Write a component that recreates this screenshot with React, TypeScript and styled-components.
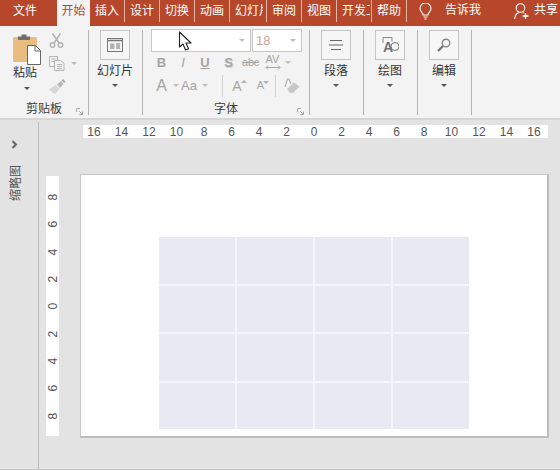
import React from "react";
import styled, { createGlobalStyle } from "styled-components";

const Global = createGlobalStyle`
  html, body { margin: 0; padding: 0; background: #e3e3e3; }
  * { box-sizing: border-box; }
`;

const CJK = `"Liberation Sans", "Noto Sans CJK SC", sans-serif`;

const Page = styled.div`
  position: relative;
  width: 560px;
  height: 470px;
  overflow: hidden;
  display: flex;
  flex-direction: column;
  background: #e3e3e3;
  font-family: ${CJK};
`;

const TabBar = styled.div`
  height: 26px;
  flex: none;
  display: flex;
  align-items: stretch;
  background: #b7472a;
`;

const Tab = styled.div<{ $w: number; $active?: boolean; $plain?: boolean }>`
  position: relative;
  width: ${(p) => p.$w}px;
  flex: none;
  display: flex;
  align-items: center;
  justify-content: ${(p) => (p.$plain ? "center" : "flex-start")};
  padding: 0 ${(p) => (p.$w > 50 ? 7 : 0)}px 8px ${(p) => (p.$plain ? 0 : 5)}px;
  font-size: 12px;
  color: ${(p) => (p.$active ? "#b7472a" : "#fff")};
  background: ${(p) => (p.$active ? "#f3f3f3" : "transparent")};
  ${(p) =>
    p.$active || p.$plain
      ? ""
      : `&::after { content: ""; position: absolute; right: 0; top: 0; bottom: 4px; width: 1px; background: #e6b5a5; }`}
`;

const TabText = styled.span<{ $clip?: boolean }>`
  display: block;
  width: ${(p) => (p.$clip ? "28px" : "auto")};
  overflow: hidden;
  white-space: nowrap;
`;

const Tell = styled.div`
  display: flex;
  align-items: flex-start;
  margin-left: 12px;
  padding-top: 3px;
  color: #fff;
  font-size: 12px;
  line-height: 14px;
  gap: 13px;
`;

const Share = styled(Tell)`
  margin-left: 33px;
  gap: 5px;
  white-space: nowrap;
`;

const Ribbon = styled.div`
  height: 94px;
  flex: none;
  display: flex;
  padding: 4px 0 3px;
  background: #f3f3f3;
  border-bottom: 2px solid #d6d6d6;
`;

const Group = styled.div<{ $w: number }>`
  position: relative;
  width: ${(p) => p.$w}px;
  flex: none;
  display: flex;
  flex-direction: column;
  border-right: 1px solid #b4b4b4;
`;

const GroupBody = styled.div`
  flex: 1;
  min-height: 0;
`;

const GroupLabel = styled.div`
  height: 12px;
  flex: none;
  text-align: center;
  font-size: 12px;
  line-height: 12px;
  color: #3c3c3c;
`;

const Launcher = styled.div`
  position: absolute;
  right: 5px;
  bottom: 0;
  width: 7px;
  height: 7px;
  display: flex;
`;

const ClipBody = styled(GroupBody)`
  display: flex;
  padding-left: 13px;
`;

const PasteCol = styled.div`
  width: 28px;
  display: flex;
  flex-direction: column;
  align-items: center;
  padding-top: 3px;
`;

const BigLabel = styled.div`
  font-size: 12px;
  line-height: 16px;
  color: #333;
  white-space: nowrap;
`;

const PasteLabel = styled(BigLabel)`
  margin-right: 4px;
`;

const DownArrow = styled.div<{ $light?: boolean; $mt?: number }>`
  width: 0;
  height: 0;
  flex: none;
  border-left: 3px solid transparent;
  border-right: 3px solid transparent;
  border-top: 3px solid ${(p) => (p.$light ? "#bdbdbd" : "#555")};
  margin-top: ${(p) => p.$mt ?? 0}px;
`;

const SmallCol = styled.div`
  margin-left: 8px;
  display: flex;
  flex-direction: column;
  gap: 8px;
  padding-top: 3px;
`;

const SmallRow = styled.div`
  display: flex;
  align-items: center;
  gap: 6px;
  height: 15px;
`;

const LargeBody = styled(GroupBody)`
  display: flex;
  flex-direction: column;
  align-items: center;
  padding-right: 1px;
`;

const IconBox = styled.div`
  width: 30px;
  height: 30px;
  flex: none;
  display: flex;
  align-items: center;
  justify-content: center;
  border: 1px solid #c4c4c4;
  background: #f6f6f6;
`;

const LargeLabel = styled(BigLabel)`
  margin-top: 3px;
`;

const FontBody = styled(GroupBody)`
  padding-left: 8px;
`;

const ComboRow = styled.div`
  display: flex;
  height: 23px;
  margin-top: -1px;
  gap: 1px;
`;

const Combo = styled.div<{ $w: number; $end?: boolean }>`
  width: ${(p) => p.$w}px;
  border: 1px solid #c6c6c6;
  background: #fff;
  display: flex;
  align-items: center;
  justify-content: ${(p) => (p.$end ? "flex-end" : "space-between")};
  padding: 0 5px 0 3px;
  font-size: 13px;
  color: #cfa58f;
`;

const ToolRow = styled.div`
  display: flex;
  align-items: center;
  height: 20px;
`;

const ToolRowLow = styled(ToolRow)`
  height: 23px;
  margin-top: 2px;
`;

const Tool = styled.div<{ $w: number; $size?: number; $bold?: boolean; $italic?: boolean; $under?: boolean; $pr?: number }>`
  width: ${(p) => p.$w}px;
  flex: none;
  display: flex;
  align-items: center;
  justify-content: center;
  padding-right: ${(p) => p.$pr ?? 0}px;
  font-family: "Liberation Sans", sans-serif;
  font-size: ${(p) => p.$size ?? 13}px;
  font-weight: ${(p) => (p.$bold ? 700 : 400)};
  font-style: ${(p) => (p.$italic ? "italic" : "normal")};
  text-decoration: ${(p) => (p.$under ? "underline" : "none")};
  color: #a4a4a4;
  line-height: 1;
`;

const StrikeTool = styled(Tool)`
  text-decoration: line-through;
  letter-spacing: -0.3px;
`;

const ShadowTool = styled(Tool)`
  text-shadow: 1px 1px 1px #cfcfcf;
`;

const SpaceTool = styled(Tool)`
  flex-direction: column;
`;

const GrowTool = styled(Tool)`
  position: relative;
`;

const Caret = styled.span<{ $down?: boolean; $right: number }>`
  position: absolute;
  top: 1px;
  right: ${(p) => p.$right}px;
  width: 0;
  height: 0;
  border-left: 3px solid transparent;
  border-right: 3px solid transparent;
  ${(p) => (p.$down ? "border-top: 3px solid #b0b0b0;" : "border-bottom: 3px solid #b0b0b0;")}
`;

const ToolDivider = styled.div<{ $ml: number; $mr: number }>`
  width: 1px;
  height: 22px;
  flex: none;
  background: #d0d0d0;
  margin-left: ${(p) => p.$ml}px;
  margin-right: ${(p) => p.$mr}px;
`;

const Main = styled.div`
  flex: 1;
  min-height: 0;
  display: flex;
  border-bottom: 1px solid #c6c6c6;
`;

const Sidebar = styled.div`
  width: 39px;
  flex: none;
  display: flex;
  flex-direction: column;
  align-items: center;
  padding: 18px 9px 0 0;
  gap: 16px;
  border-right: 1px solid #bdbdbd;
  margin-top: 2px;
`;

const SideText = styled.div`
  writing-mode: vertical-rl;
  text-orientation: sideways;
  transform: rotate(180deg);
  font-size: 12px;
  color: #555;
  line-height: 14px;
  margin-left: 2px;
`;

const Workspace = styled.div`
  flex: 1;
  min-width: 0;
  padding-top: 5px;
`;

const HRuler = styled.div`
  margin-left: 44px;
  width: 465px;
  height: 13px;
  background: #fff;
  display: grid;
  grid-template-columns: repeat(17, 27.5px);
  justify-content: center;
  padding-right: 3px;
`;

const Num = styled.div`
  display: flex;
  align-items: center;
  justify-content: center;
  font-family: "Liberation Sans", sans-serif;
  font-size: 12px;
  color: #555;
  line-height: 1;
`;

const SlideRow = styled.div`
  display: flex;
  align-items: flex-start;
  margin-top: 36px;
  padding-left: 7px;
`;

const VRuler = styled.div`
  width: 13px;
  height: 260px;
  margin-top: 2px;
  margin-right: 21px;
  flex: none;
  background: #fff;
  display: grid;
  grid-template-rows: repeat(9, 27.4px);
  align-content: center;
`;

const VNum = styled(Num)`
  writing-mode: vertical-rl;
  transform: rotate(180deg);
`;

const Slide = styled.div`
  width: 469px;
  height: 264px;
  flex: none;
  background: #fff;
  border: 1px solid #c8c8c8;
  border-right: 2px solid #bdbdbd;
  border-bottom: 2px solid #bdbdbd;
  padding: 62px 0 0 78px;
`;

const Table = styled.div`
  width: 310px;
  height: 192px;
  display: grid;
  grid-template-columns: repeat(4, 1fr);
  grid-template-rows: repeat(4, 1fr);
  gap: 2px;
  background: #f5f6fb;
`;

const Cell = styled.div`
  background: #e8eaf3;
`;

const Cursor = styled.svg`
  position: absolute;
  left: 178px;
  top: 31px;
`;

const tabs: [string, number, boolean][] = [
  ["插入", 35, false],
  ["设计", 35, false],
  ["切换", 35, false],
  ["动画", 35, false],
  ["幻灯片放映", 37, true],
  ["审阅", 35, false],
  ["视图", 35, false],
  ["开发工具", 35, true],
  ["帮助", 35, false],
];

const LauncherIcon = () => (
  <Launcher>
    <svg width="7" height="7" viewBox="0 0 7 7" fill="none" stroke="#a8a8a8" strokeWidth="1">
      <path d="M.5 4V.5H4M3 3l3.500 3.500M6.500 3.500v3h-3" />
    </svg>
  </Launcher>
);

const App = () => (
  <Page>
    <Global />
    <TabBar>
      <Tab $w={57} $plain>文件</Tab>
      <Tab $w={33} $active $plain>开始</Tab>
      {tabs.map(([t, w, clip]) => (
        <Tab key={t} $w={w}>
          <TabText $clip={clip}>{t}</TabText>
        </Tab>
      ))}
      <Tell>
        <svg width="13" height="17" viewBox="0 0 13 17" fill="none" stroke="#fff" strokeWidth="1.1">
          <path d="M4 12c0-2.500-3-3.500-3-6.500a5.500 5.500 0 0 1 11 0c0 3-3 4-3 6.500z" />
          <path d="M4.500 14h4M5.500 16h2" />
        </svg>
        <span>告诉我</span>
      </Tell>
      <Share>
        <svg width="15" height="17" viewBox="0 0 15 17" fill="none" stroke="#fff" strokeWidth="1.1">
          <circle cx="6.500" cy="5" r="4.300" />
          <path d="M.8 16c0-3 1.500-5.500 4-6.500M9 9.500l1 .6" />
          <path d="M8.500 13h6M11.500 10v6" strokeWidth="1.400" />
        </svg>
        <span>共享</span>
      </Share>
    </TabBar>

    <Ribbon>
      <Group $w={89}>
        <ClipBody>
          <PasteCol>
            <svg width="28" height="32" viewBox="0 0 28 32">
              <rect x="0" y="4" width="24" height="25" rx="1.500" fill="#e9bc80" />
              <path d="M5 7V3.500h3.500V1.500h5V3.500H17V7z" fill="#6f6f6f" />
              <path d="M14.500 12.500h8l5 5v14h-13z" fill="#fff" stroke="#666" strokeWidth="1" />
              <path d="M22 12.500v5.500h5.500" fill="none" stroke="#666" strokeWidth="1" />
            </svg>
            <PasteLabel>粘贴</PasteLabel>
            <DownArrow $mt={6} />
          </PasteCol>
          <SmallCol>
            <SmallRow>
              <svg width="15" height="15" viewBox="0 0 15 15" fill="none" stroke="#b4b4b4" strokeWidth="1.500">
                <circle cx="3.500" cy="12" r="2.300" />
                <circle cx="11.500" cy="12" r="2.300" />
                <path d="M5 10 11.500.5M10 10 3.500.5" />
              </svg>
            </SmallRow>
            <SmallRow>
              <svg width="16" height="15" viewBox="0 0 16 15" fill="none" stroke="#b4b4b4" strokeWidth="1">
                <path d="M.5.500h8v10h-8zM2.500 3h4M2.500 5.500h4" />
                <path d="M5.500 4.500h6l3.500 3v7h-9.500z" fill="#f3f3f3" />
                <path d="M8 8.500h5M8 10.500h5M8 12.500h5" />
              </svg>
              <DownArrow $light />
            </SmallRow>
            <SmallRow>
              <svg width="17" height="15" viewBox="0 0 17 15">
                <path d="M0 10.500 7 6l3.500 4L6 15z" fill="#d6d6d6" />
                <path d="M8 5.500l4-3.500 2.500 3-3.500 4z" fill="#b8b8b8" />
                <path d="M12.500 1.500 14 0l2.500 2.500L15 4z" fill="#a8a8a8" />
              </svg>
            </SmallRow>
          </SmallCol>
        </ClipBody>
        <GroupLabel>剪贴板</GroupLabel>
        <LauncherIcon />
      </Group>

      <Group $w={54}>
        <LargeBody>
          <IconBox>
            <svg width="16" height="14" viewBox="0 0 16 14" fill="none" stroke="#777">
              <rect x=".5" y=".5" width="15" height="13" />
              <path d="M.5 2.500h15" strokeWidth="1.500" />
              <rect x="3" y="5.500" width="4.500" height="5.500" fill="#b0b0b0" stroke="none" />
              <path d="M9 6h4M9 8h4M9 10h4" />
            </svg>
          </IconBox>
          <LargeLabel>幻灯片</LargeLabel>
          <DownArrow $mt={5} />
        </LargeBody>
      </Group>

      <Group $w={167}>
        <FontBody>
          <ComboRow>
            <Combo $w={100} $end>
              <DownArrow $light />
            </Combo>
            <Combo $w={50}>
              18
              <DownArrow $light />
            </Combo>
          </ComboRow>
          <ToolRow>
            <Tool $w={21} $bold>B</Tool>
            <Tool $w={22} $italic>I</Tool>
            <Tool $w={22} $under $bold>U</Tool>
            <ShadowTool $w={25} $bold>S</ShadowTool>
            <StrikeTool $w={19} $size={11}>abc</StrikeTool>
            <SpaceTool $w={25} $size={11}>
              AV
              <svg width="16" height="5" viewBox="0 0 16 5" fill="none" stroke="#a8a8a8">
                <path d="M1 2.500h14M3 .5l-2 2 2 2M13 .5l2 2-2 2" />
              </svg>
            </SpaceTool>
            <DownArrow $light />
          </ToolRow>
          <ToolRowLow>
            <Tool $w={21} $size={16}>A</Tool>
            <Tool $w={8}><DownArrow $light /></Tool>
            <Tool $w={18} $size={13}>Aa</Tool>
            <Tool $w={13}><DownArrow $light /></Tool>
            <ToolDivider $ml={11} $mr={6} />
            <GrowTool $w={21} $size={14} $pr={5}>A<Caret $right={3} /></GrowTool>
            <GrowTool $w={21} $size={11}>A<Caret $down $right={2} /></GrowTool>
            <ToolDivider $ml={4} $mr={8} />
            <svg width="16" height="16" viewBox="0 0 16 16">
              <path d="M3 11 10 4.500l5.500 4L9 15H6z" fill="#c8c8c8" />
              <path d="M1 9 3.500 1h1.500l2 5" fill="none" stroke="#b0b0b0" strokeWidth="1.200" />
            </svg>
          </ToolRowLow>
        </FontBody>
        <GroupLabel>字体</GroupLabel>
        <LauncherIcon />
      </Group>

      <Group $w={54}>
        <LargeBody>
          <IconBox>
            <svg width="14" height="10" viewBox="0 0 14 10" fill="none" stroke="#666">
              <path d="M1 .5h12M0 5h14M2 9.500h10" />
            </svg>
          </IconBox>
          <LargeLabel>段落</LargeLabel>
          <DownArrow $mt={5} />
        </LargeBody>
      </Group>

      <Group $w={54}>
        <LargeBody>
          <IconBox>
            <svg width="18" height="20" viewBox="0 0 18 20" fill="none">
              <path d="M2 8V2.500h9v4" stroke="#888" />
              <circle cx="14" cy="11.500" r="4" stroke="#777" />
              <text x="2" y="17" fontFamily="Liberation Sans" fontSize="14" fontWeight="700" fill="#6d7480">A</text>
            </svg>
          </IconBox>
          <LargeLabel>绘图</LargeLabel>
          <DownArrow $mt={5} />
        </LargeBody>
      </Group>

      <Group $w={54}>
        <LargeBody>
          <IconBox>
            <svg width="14" height="14" viewBox="0 0 14 14" fill="none">
              <circle cx="9" cy="5" r="3.800" stroke="#888" strokeWidth="1.400" />
              <path d="M6 8 1 13" stroke="#6f6f6f" strokeWidth="2.200" />
            </svg>
          </IconBox>
          <LargeLabel>编辑</LargeLabel>
          <DownArrow $mt={5} />
        </LargeBody>
      </Group>
    </Ribbon>

    <Main>
      <Sidebar>
        <svg width="7" height="9" viewBox="0 0 7 9" fill="none" stroke="#666" strokeWidth="2">
          <path d="M1.500 1 5 4.500 1.500 8" />
        </svg>
        <SideText>缩略图</SideText>
      </Sidebar>
      <Workspace>
        <HRuler>
          {[16, 14, 12, 10, 8, 6, 4, 2, 0, 2, 4, 6, 8, 10, 12, 14, 16].map((n, i) => (
            <Num key={i}>{n}</Num>
          ))}
        </HRuler>
        <SlideRow>
          <VRuler>
            {[8, 6, 4, 2, 0, 2, 4, 6, 8].map((n, i) => (
              <VNum key={i}>{n}</VNum>
            ))}
          </VRuler>
          <Slide>
            <Table>
              {Array.from({ length: 16 }, (_, i) => (
                <Cell key={i} />
              ))}
            </Table>
          </Slide>
        </SlideRow>
      </Workspace>
    </Main>

    <Cursor width="14" height="21" viewBox="0 0 14 21">
      <path d="M1.500 1v15l3.500-3 2.500 6 3-1.300-2.500-5.700H13z" fill="#fff" stroke="#222" strokeWidth="1.100" strokeLinejoin="round" />
    </Cursor>
  </Page>
);

export default App;
